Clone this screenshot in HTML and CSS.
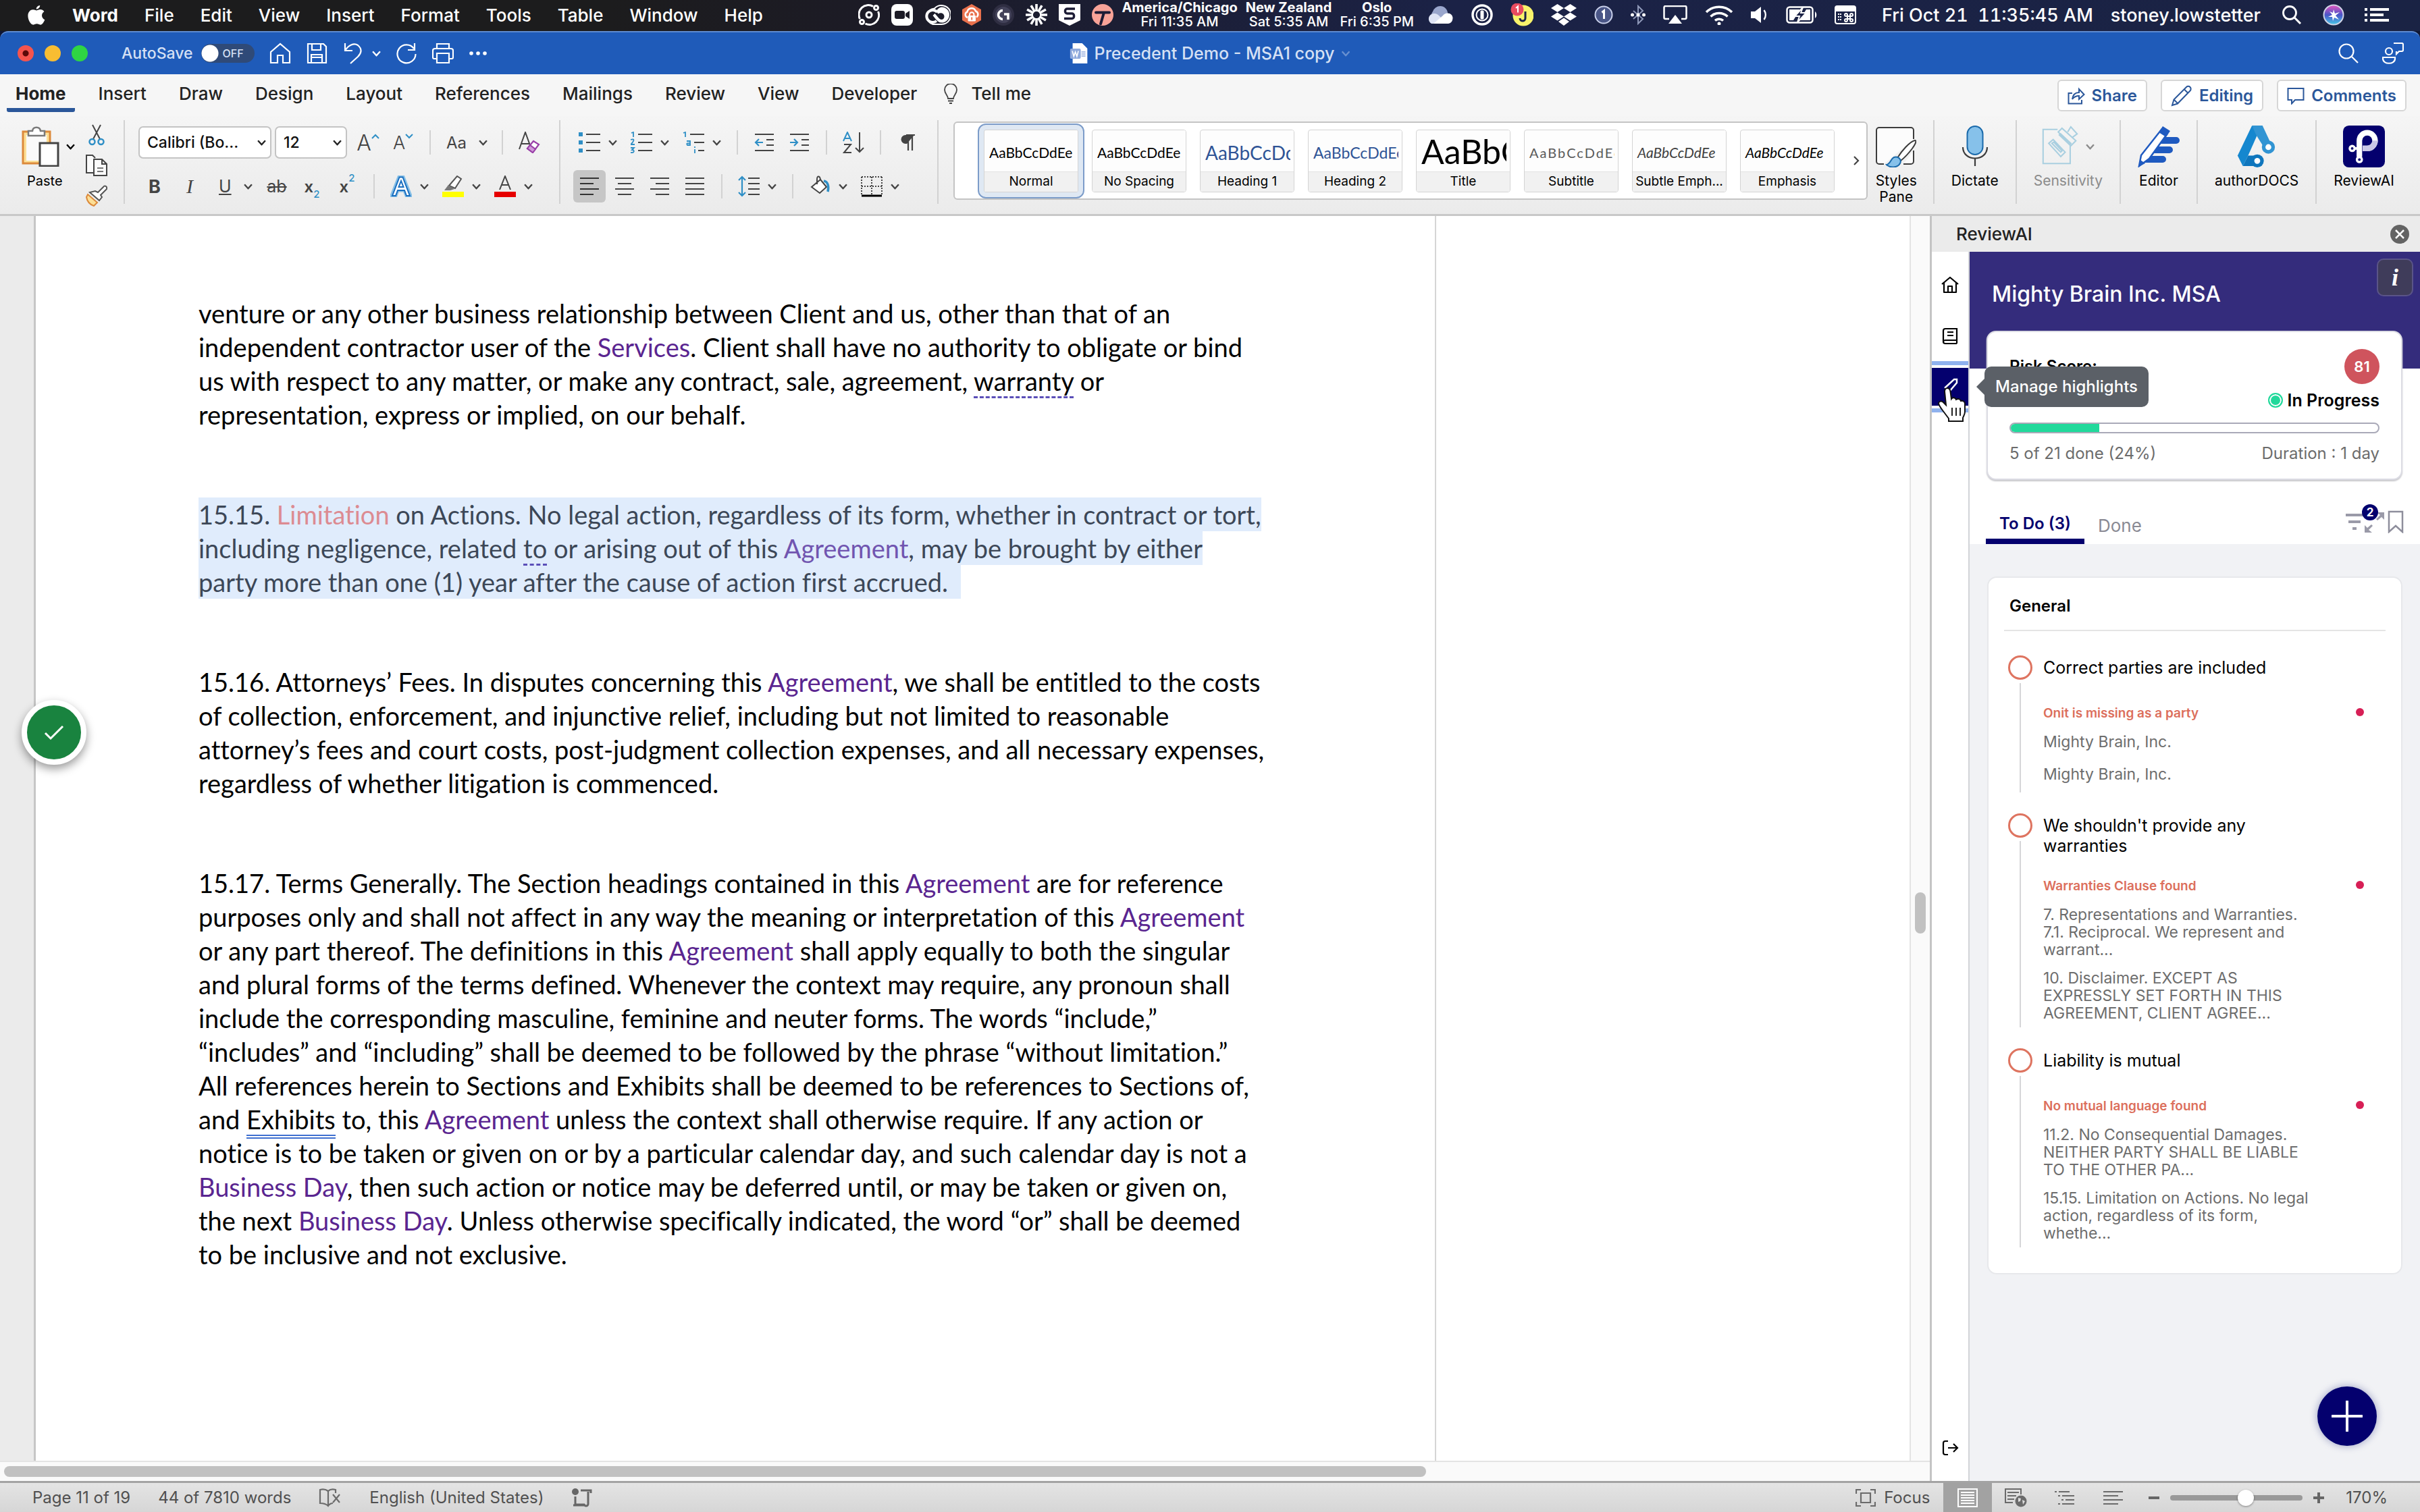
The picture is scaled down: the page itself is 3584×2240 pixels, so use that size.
FILE: index.html
```html
<!DOCTYPE html>
<html lang="en">
<head>
<meta charset="utf-8">
<title>Precedent Demo - MSA1 copy</title>
<link rel="stylesheet" href="styles.css">
</head>
<body>
<svg class="defs" aria-hidden="true">
  <symbol id="chev" viewBox="0 0 12 8"><path d="M1 1l5 5.500 5-5.500" fill="none" stroke="currentColor" stroke-width="2.200"/></symbol>
</svg>

<header class="menubar">
  <nav class="menus">
    <svg class="apple" viewBox="0 0 28 34"><path fill="#fff" d="M19.500 2c.2 2.700-2.400 6-5.700 6C13.400 5 16.300 2.200 19.500 2zM14.300 10c1.600 0 3-1.400 5.800-1.400 2.300 0 4.700 1.300 6 3.400-5.300 3.200-4.400 10.400 1 12.600-1.300 3.500-4 8-6.800 8-2.200 0-2.900-1.400-5.700-1.400s-3.600 1.400-5.600 1.400C4.800 32.600.6 24.800.6 18.600c0-6.300 4-9.800 7.900-9.800 2.600 0 4.300 1.200 5.800 1.200z"/></svg>
    <a class="app" href="#">Word</a><a href="#">File</a><a href="#">Edit</a><a href="#">View</a><a href="#">Insert</a><a href="#">Format</a><a href="#">Tools</a><a href="#">Table</a><a href="#">Window</a><a href="#">Help</a>
  </nav>
  <div class="extras">
    <div class="tray tray-a">
      <svg viewBox="0 0 32 32" width="32" height="32"><g fill="none" stroke="#fff" stroke-width="3"><path d="M22 3.500A14 14 0 0 0 2.500 22M10.500 29A14 14 0 0 0 29.500 11"/><circle cx="16" cy="16" r="4"/><circle cx="26.500" cy="5.500" r="3"/><circle cx="5.500" cy="26.500" r="3"/></g></svg>
      <svg viewBox="0 0 32 32" width="32" height="32"><rect width="32" height="32" rx="8" fill="#fff"/><rect x="5" y="10" width="15" height="12" rx="3" fill="#1c1b26"/><path d="M21 14l6-4v12l-6-4z" fill="#1c1b26"/></svg>
      <svg viewBox="0 0 39 32" width="39" height="32"><path d="M12.500 30h13A14 14 0 1 0 15 6.500 12 12 0 0 0 12.500 30z" fill="none" stroke="#fff" stroke-width="2"/><path d="M25.500 4.500a11.500 11.500 0 0 1 0 23c-4 0-6-2-9-5.500l-4-5 3-3 6 7c3 3.500 8 2 8-2.500s-5-7-9-4l-3-3.500a11 11 0 0 1 8-6.500z" fill="#fff"/><path d="M19 12a9 9 0 1 0-1 13" fill="none" stroke="#fff" stroke-width="4"/></svg>
      <svg viewBox="0 0 28 32" width="28" height="32"><path d="M14 0l14 8v16l-14 8-14-8V8z" fill="#e9714d"/><path d="M8 20a4.500 4.500 0 0 1-.5-8.500 6.500 6.500 0 0 1 12.500-1 5 5 0 0 1 1 9" fill="none" stroke="#fff" stroke-width="2.500"/><rect x="8.500" y="17" width="11.500" height="8.500" rx="1" fill="#fff"/><path d="M11 17v-1.500a3.200 3.200 0 0 1 6.400 0V17" fill="none" stroke="#fff" stroke-width="2"/><path d="M14.200 19.500v4" stroke="#e9714d" stroke-width="2"/></svg>
      <svg viewBox="0 0 32 32" width="32" height="32"><circle cx="16" cy="16" r="16" fill="#2f2e42"/><circle cx="16" cy="16" r="12" fill="#44435a"/><path d="M15 9.500a6.500 6.500 0 0 0 0 13M17 15h6v8" fill="none" stroke="#fff" stroke-width="3.500"/></svg>
      <svg viewBox="0 0 32 32" width="32" height="32"><g stroke="#fff" stroke-width="3.600"><path d="M16 0v11M16 21v11M0 16h11M21 16h11M8 2.100l5.500 9.600M18.500 20.300L24 29.900M2.100 8l9.600 5.500M20.300 18.500l9.600 5.500M2.100 24l9.600-5.500M20.300 13.500L29.900 8M8 29.900l5.500-9.600M18.500 11.700L24 2.100"/></g></svg>
      <svg viewBox="0 0 32 32" width="32" height="32"><path d="M0 0h32v24l-16 8-16-8z" fill="#fff"/><path d="M24 7H12.500a3 3 0 0 0-3 3v1a3 3 0 0 0 3 3h7a3 3 0 0 1 3 3v1.500a3 3 0 0 1-3 3H8" fill="none" stroke="#1c1b35" stroke-width="3.500"/></svg>
      <svg viewBox="0 0 32 32" width="32" height="32"><circle cx="16" cy="16" r="16" fill="#f8a398"/><path d="M6 12.500h20M18 12.500l-5 17" stroke="#1c1b35" stroke-width="4" stroke-linecap="round" fill="none"/></svg>
    </div>
    <div class="clocks">
      <div><b>America/Chicago</b><span>Fri 11:35 AM</span></div>
      <div><b>New Zealand</b><span>Sat 5:35 AM</span></div>
      <div><b>Oslo</b><span>Fri 6:35 PM</span></div>
    </div>
    <div class="tray tray-b">
      <svg viewBox="0 0 40 26" width="40" height="28"><path d="M20 0a11 11 0 0 1 11 11L12 22A9 9 0 0 1 9 8 11.500 11.500 0 0 1 20 0z" fill="#9aa6cc"/><path d="M7 26a8 8 0 0 1 0-14c4-2 8-1 11 2l12 12z" fill="#dfe4f5"/><path d="M10 26h22a8 8 0 0 0 2-15c-4-1.500-8 0-10 3z" fill="#fff"/></svg>
      <svg viewBox="0 0 32 32" width="32" height="32"><circle cx="16" cy="16" r="14" fill="none" stroke="#fff" stroke-width="3.500"/><circle cx="16" cy="16" r="8.500" fill="none" stroke="#fff" stroke-width="2"/><rect x="13.500" y="9.500" width="5" height="13" rx="1.500" fill="#fff"/></svg>
      <svg viewBox="0 0 34 34" width="34" height="34"><circle cx="19" cy="18" r="15.500" fill="#f8f36b"/><path d="M22 12v10a4 4 0 0 1-8 0" fill="none" stroke="#1d2348" stroke-width="3"/><circle cx="10" cy="9" r="9.500" fill="#e94b60"/><path d="M8 7l3-2.500v9" fill="none" stroke="#fff" stroke-width="2"/></svg>
      <svg viewBox="0 0 38 32" width="38" height="32"><path fill="#fff" d="M9.500 0l9.500 6-9.500 6L0 6zM28.500 0L38 6l-9.500 6L19 6zM9.500 12.500l9.500 6-9.500 6-9.500-6zM28.500 12.500l9.500 6-9.500 6-9.500-6zM19 20.500l8 5.500-8 6-8-6z"/></svg>
      <svg viewBox="0 0 28 28" width="28" height="28"><circle cx="14" cy="14" r="12.500" fill="#4a5687" stroke="#c9d0ea" stroke-width="2"/><path d="M11.500 10.500l3-2.500v12" fill="none" stroke="#fff" stroke-width="3"/></svg>
      <svg viewBox="0 0 22 30" width="22" height="30"><path d="M4 9l14 12-7 7V2l7 7L4 21" fill="none" stroke="#8e98b8" stroke-width="2"/><g fill="#fff"><circle cx="2.500" cy="15" r="2.500"/><circle cx="11" cy="15" r="2.500"/><circle cx="19.500" cy="15" r="2.500"/></g></svg>
      <svg viewBox="0 0 36 28" width="36" height="28"><path d="M9 20H3.500a2 2 0 0 1-2-2V3a2 2 0 0 1 2-2h29a2 2 0 0 1 2 2v15a2 2 0 0 1-2 2H27" fill="none" stroke="#fff" stroke-width="2.500"/><path d="M18 14l10 13H8z" fill="#fff"/></svg>
      <svg viewBox="0 0 42 30" width="42" height="30"><g fill="none" stroke="#fff" stroke-width="3.500"><path d="M2 11a27 27 0 0 1 38 0M8.500 17.500a18 18 0 0 1 25 0M15 23.500a9 9 0 0 1 12 0"/></g><circle cx="21" cy="28" r="2.500" fill="#fff"/></svg>
      <svg viewBox="0 0 26 24" width="26" height="24"><path d="M0 7h6l9-7v24l-9-7H0z" fill="#fff"/><path d="M19.500 5a12 12 0 0 1 0 14" fill="none" stroke="#fff" stroke-width="2.500"/></svg>
      <svg viewBox="0 0 46 26" width="46" height="26"><rect x="1.500" y="1.500" width="38" height="23" rx="4" fill="none" stroke="#fff" stroke-width="2.500"/><path d="M5 5h16L11 21H5zM36 21H20L30 5h6z" fill="#fff"/><path d="M25 2L13 15h7l-3 9 13-14h-8z" fill="#1b2246" stroke="#fff" stroke-width="2"/><path d="M43 8c3 2 3 8 0 10z" fill="#fff"/></svg>
      <svg viewBox="0 0 32 28" width="32" height="28"><rect x="1" y="1" width="30" height="26" rx="3" fill="none" stroke="#fff" stroke-width="2"/><path d="M1 2h30v7H1z" fill="#fff"/><path d="M5 13h5M5 17h5M5 21h5" stroke="#fff" stroke-width="2" stroke-dasharray="2 1"/><g fill="none" stroke="#fff" stroke-width="2"><circle cx="17" cy="14" r="2"/><circle cx="25" cy="14" r="2"/><circle cx="17" cy="22" r="2"/><circle cx="25" cy="22" r="2"/><rect x="19" y="16" width="4" height="4"/></g></svg>
    </div>
    <div class="clock-main"><span>Fri Oct 21&nbsp; 11:35:45 AM</span><span>stoney.lowstetter</span></div>
    <div class="tray tray-c">
      <svg viewBox="0 0 30 28" width="30" height="28"><circle cx="11" cy="11" r="9.500" fill="none" stroke="#fff" stroke-width="2.800"/><path d="M18 18l9 9" stroke="#fff" stroke-width="3"/></svg>
      <svg viewBox="0 0 32 32" width="32" height="32"><defs><linearGradient id="siri" x1="0" y1="0" x2="0" y2="1"><stop offset="0" stop-color="#e655c0"/><stop offset=".5" stop-color="#4a55c8"/><stop offset="1" stop-color="#46c8e8"/></linearGradient></defs><circle cx="16" cy="16" r="14.500" fill="url(#siri)" stroke="#cfd3e6" stroke-width="2"/><path d="M16 8l2 6 7-2-6 5 5 6-7-3-2 5-1-6-6 0 6-3-4-5 5 2z" fill="#fff"/></svg>
      <svg viewBox="0 0 36 20" width="36" height="22"><g stroke="#fff" stroke-width="4"><path d="M8 2h28M8 10h20M8 18h28M0 2h4M0 10h4M0 18h4"/></g></svg>
    </div>
  </div>
</header>

<section class="titlebar">
  <div class="window-ctl"><i class="red"></i><i class="yellow"></i><i class="green"></i></div>
  <label class="autosave">AutoSave<input type="checkbox" role="switch" aria-label="AutoSave"><span class="switch">OFF</span></label>
  <div class="quick">
    <button aria-label="Home"><svg viewBox="0 0 32 32" width="32" height="32"><path d="M2 14L16 2l14 12v16H20V19h-8v11H2z"/></svg></button>
    <button aria-label="Save"><svg viewBox="0 0 32 32" width="32" height="32"><path d="M3 2h23l4 4v24H3zM9 2v9h13V2M8 30V18h16v12M8 22h16"/></svg></button>
    <button aria-label="Undo" class="undo"><svg viewBox="0 0 32 32" width="32" height="32"><path d="M4 1v11h11M4 12c5-8 13-12 19-8 7 6 5 12 0 17L12 31"/></svg><svg class="chev" viewBox="0 0 12 8"><use href="#chev"/></svg></button>
    <button aria-label="Redo"><svg viewBox="0 0 32 32" width="32" height="32"><path d="M28 1v10H18M27 9A13.500 13.500 0 1 0 29.500 17"/></svg></button>
    <button aria-label="Print"><svg viewBox="0 0 32 32" width="32" height="32"><path d="M7 9V2h18v7M7 24H3a2 2 0 0 1-2-2V12a3 3 0 0 1 3-3h24a3 3 0 0 1 3 3v10a2 2 0 0 1-2 2h-4M7 16h18v14H7z"/></svg></button>
    <button aria-label="More"><svg viewBox="0 0 28 8" width="28" height="8"><g fill="#fff" stroke="none"><circle cx="4" cy="4" r="2.800"/><circle cx="14" cy="4" r="2.800"/><circle cx="24" cy="4" r="2.800"/></g></svg></button>
  </div>
  <div class="doc-title">
    <svg viewBox="0 0 26 30" width="26" height="30"><path d="M4 0h14l8 8v22H4z" fill="#fff"/><rect x="0" y="8" width="16" height="15" rx="2" fill="#8fa9dc"/><path d="M3.500 11.500l2.200 8L8 13l2.300 6.500 2.200-8" fill="none" stroke="#fff" stroke-width="1.600"/><path d="M17 13h6M17 16h6M17 19h6" stroke="#8fa9dc" stroke-width="1.500"/></svg>
    <h1>Precedent Demo - MSA1 copy</h1>
    <svg class="chev" viewBox="0 0 12 8"><use href="#chev"/></svg>
  </div>
  <div class="title-right">
    <button aria-label="Search"><svg viewBox="0 0 32 32" width="32" height="32"><circle cx="13" cy="13" r="10.500"/><path d="M21 21l9 9"/></svg></button>
    <button aria-label="Collaborators"><svg viewBox="0 0 32 32" width="32" height="32"><circle cx="10" cy="13" r="5"/><path d="M1 22h18v2c0 9-18 9-18 0zM17 1h12a2 2 0 0 1 2 2v8a2 2 0 0 1-2 2h-4l-4 4v-4"/></svg></button>
  </div>
</section>

<section class="tabs">
  <nav class="tab-list">
    <a class="active" href="#">Home</a><a href="#">Insert</a><a href="#">Draw</a><a href="#">Design</a><a href="#">Layout</a><a href="#">References</a><a href="#">Mailings</a><a href="#">Review</a><a href="#">View</a><a href="#">Developer</a>
    <a class="tellme" href="#"><svg viewBox="0 0 20 30" width="20" height="30"><g fill="none" stroke="#444" stroke-width="1.800"><path d="M6 22c0-5-5-7-5-13a9 9 0 0 1 18 0c0 6-5 8-5 13zM6 25.500h8M8 29h4"/></g></svg>Tell me</a>
  </nav>
  <div class="tab-actions">
    <button><svg viewBox="0 0 26 26" width="26" height="26"><path d="M7 9H1.500v15.500H21V19M7 18c1-7 5-10 10-10V3l7.500 8L17 18v-5c-4 0-7 1-10 5z"/></svg>Share</button>
    <button><svg viewBox="0 0 32 32" width="32" height="32"><path d="M2 30l2.500-8.500L23 3a3.500 3.500 0 0 1 5.500 5.500L10 27.500zM20 6.500l5.500 5.500M4.500 21.500l6 6"/></svg>Editing</button>
    <button><svg viewBox="0 0 26 26" width="26" height="26"><path d="M1.500 2h23v17H12l-5 5.500V19H1.500z"/></svg>Comments</button>
  </div>
</section>

<section class="ribbon">
  <div class="group paste-group">
    <button class="paste">
      <span class="paste-icon"><svg viewBox="0 0 56 60" width="56" height="60"><path d="M2 8h40v47H2z" fill="#fcdf96" stroke="#dc8a3b" stroke-width="3"/><path d="M7 13h30v38H7z" fill="#fafafa"/><path d="M10 14V7h6c1-7 11-7 12 0h6v7z" fill="#fff" stroke="#7a7a7a" stroke-width="2.500"/><path d="M27 25h27v34H27z" fill="#fff" stroke="#444" stroke-width="3"/></svg><svg class="chev" viewBox="0 0 12 8"><use href="#chev"/></svg></span>
      Paste
    </button>
    <div class="clip">
      <button aria-label="Cut"><svg viewBox="0 0 32 32" width="32" height="32"><path d="M10 1l11 21M22 1L11 22" stroke="#444" stroke-width="2" fill="none"/><g fill="none" stroke="#2f8fc6" stroke-width="2.500"><circle cx="9.500" cy="26" r="4"/><circle cx="22.500" cy="26" r="4"/></g></svg></button>
      <button aria-label="Copy"><svg viewBox="0 0 32 32" width="32" height="32"><g fill="#fafafa" stroke="#444" stroke-width="2"><path d="M13 27H1V1h9l4 4"/><path d="M12 7h12l7 7v17H12zM24 7v7h7"/></g><path d="M17 20h9M17 25h9" stroke="#777" stroke-width="2"/></svg></button>
      <button aria-label="Format painter"><svg viewBox="0 0 32 32" width="32" height="32"><path d="M3 14l14 12-5 5C6 29 2 24 1 18z" fill="#fcdf96" stroke="#dc8a3b" stroke-width="2"/><path d="M6 11l14 12 4-5-2-3 9-9c1-4-3-6-5-3l-8 8-4-2z" fill="#fff" stroke="#555" stroke-width="2"/></svg></button>
    </div>
  </div>

  <div class="group rows">
    <div class="row">
      <span class="fields">
        <span class="field font"><select aria-label="Font"><option>Calibri (Bo...</option></select><svg class="chev" viewBox="0 0 12 8"><use href="#chev"/></svg></span>
        <span class="field size"><select aria-label="Font size"><option>12</option></select><svg class="chev" viewBox="0 0 12 8"><use href="#chev"/></svg></span>
      </span>
      <button class="t glyph big-a" aria-label="Grow font">A<svg class="caret" viewBox="0 0 12 8"><path d="M1 7l5-5 5 5"/></svg></button>
      <button class="t glyph small-a" aria-label="Shrink font">A<svg class="caret" viewBox="0 0 12 8"><path d="M1 1l5 5 5-5"/></svg></button>
      <i class="sep"></i>
      <button class="t split glyph case">Aa<svg class="chev" viewBox="0 0 12 8"><use href="#chev"/></svg></button>
      <i class="sep"></i>
      <button class="t" aria-label="Clear formatting"><svg viewBox="0 0 32 32" width="32" height="32"><path d="M1 26L10 1l8 22M4 18h12" fill="none" stroke="#444" stroke-width="2"/><path d="M13 25l9-11 8 5-9 12z" fill="#fff" stroke="#9a3fa8" stroke-width="2.200"/><path d="M13 25l4-5 8 6-4 5z" fill="#cf9ad8" stroke="#9a3fa8" stroke-width="2"/></svg></button>
    </div>
    <div class="row row-b">
      <button class="t glyph bold">B</button>
      <button class="t glyph ital">I</button>
      <button class="t split glyph under"><u>U</u><svg class="chev" viewBox="0 0 12 8"><use href="#chev"/></svg></button>
      <button class="t glyph strike"><s>ab</s></button>
      <button class="t glyph bold script">x<sub>2</sub></button>
      <button class="t glyph bold script">x<sup>2</sup></button>
      <i class="sep"></i>
      <button class="t split" aria-label="Text effects"><svg viewBox="0 0 32 32" width="32" height="32"><path d="M2 30L13 2h6l11 28h-6l-3-8H11l-3 8z" fill="#fff" stroke="#86bfe6" stroke-width="5"/><path d="M3 30L13.500 2.500h5L29 30h-5l-3-8H11l-3 8zM12.500 17h7L16 8z" fill="#fff" stroke="#1a6fc0" stroke-width="2"/></svg><svg class="chev" viewBox="0 0 12 8"><use href="#chev"/></svg></button>
      <button class="t split" aria-label="Highlight"><svg viewBox="0 0 32 32" width="32" height="32"><path d="M10 15L22 1l6 4-9 14z" fill="#fff" stroke="#555" stroke-width="2"/><path d="M3 22l6-8 9 6-6 2z" fill="#777"/><path d="M0 24h32v8H0z" fill="#ff0"/></svg><svg class="chev" viewBox="0 0 12 8"><use href="#chev"/></svg></button>
      <button class="t split" aria-label="Font color"><svg viewBox="0 0 32 32" width="32" height="32"><path d="M8 21L16 1l8 20M11 14h10" fill="none" stroke="#444" stroke-width="2"/><path d="M0 24h32v8H0z" fill="#e60000"/></svg><svg class="chev" viewBox="0 0 12 8"><use href="#chev"/></svg></button>
    </div>
  </div>

  <div class="group rows para">
    <div class="row">
      <button class="t split" aria-label="Bullets"><svg viewBox="0 0 32 32" width="32" height="32"><path d="M0 1h6v6H0zM0 13h6v6H0zM0 25h6v6H0z" fill="#2f8fc6"/><path d="M11 4h21M11 16h21M11 28h21" stroke="#444" stroke-width="2.200"/></svg><svg class="chev" viewBox="0 0 12 8"><use href="#chev"/></svg></button>
      <button class="t split" aria-label="Numbering"><svg viewBox="0 0 32 32" width="32" height="32"><g fill="none" stroke="#2f8fc6" stroke-width="1.800"><path d="M1 2l3-1v7M0 12c6-2 6 1 0 7h6M0 24h5l-3 3c4 0 4 5-2 4"/></g><path d="M11 4h21M11 16h21M11 28h21" stroke="#444" stroke-width="2.200"/></svg><svg class="chev" viewBox="0 0 12 8"><use href="#chev"/></svg></button>
      <button class="t split" aria-label="Multilevel list"><svg viewBox="0 0 32 32" width="32" height="32"><g fill="none" stroke="#2f8fc6" stroke-width="1.800"><path d="M1 2l3-1v7M6 14h5v6H7c-2-3 0-3 4-3M18 26v6M18 22v2"/></g><path d="M11 4h21M17 16h15M23 28h9" stroke="#444" stroke-width="2.200"/></svg><svg class="chev" viewBox="0 0 12 8"><use href="#chev"/></svg></button>
      <i class="sep"></i>
      <button class="t" aria-label="Decrease indent"><svg viewBox="0 0 32 32" width="32" height="32"><path d="M2 4h28M19 12h11M19 20h11M2 28h28" stroke="#444" stroke-width="2.200"/><path d="M14 16H3M8 11l-5 5 5 5" fill="none" stroke="#2f8fc6" stroke-width="2.200"/></svg></button>
      <button class="t" aria-label="Increase indent"><svg viewBox="0 0 32 32" width="32" height="32"><path d="M2 4h28M19 12h11M19 20h11M2 28h28" stroke="#444" stroke-width="2.200"/><path d="M2 16h11M8 11l5 5-5 5" fill="none" stroke="#2f8fc6" stroke-width="2.200"/></svg></button>
      <i class="sep"></i>
      <button class="t" aria-label="Sort"><svg viewBox="0 0 32 32" width="32" height="32"><path d="M1 14L7 1l6 13M3 10h8" fill="none" stroke="#2f8fc6" stroke-width="2"/><path d="M2 19h10L2 31h11M25 1v29M19 24l6 6 6-6" fill="none" stroke="#444" stroke-width="2"/></svg></button>
      <i class="sep"></i>
      <button class="t" aria-label="Show paragraph marks"><svg viewBox="0 0 32 32" width="32" height="32"><path d="M26 5h-13a6.500 6.500 0 0 0 0 13h2" fill="#444"/><path d="M27 5H14M17 5v23M23 5v23" stroke="#444" stroke-width="2.200" fill="none"/></svg></button>
    </div>
    <div class="row">
      <button class="t picked" aria-label="Align left"><svg viewBox="0 0 32 32" width="32" height="32"><path d="M2 4h28M2 12h20M2 20h28M2 28h20" stroke="#333" stroke-width="2.200"/></svg></button>
      <button class="t" aria-label="Align center"><svg viewBox="0 0 32 32" width="32" height="32"><path d="M2 4h28M6 12h20M2 20h28M6 28h20" stroke="#444" stroke-width="2.200"/></svg></button>
      <button class="t" aria-label="Align right"><svg viewBox="0 0 32 32" width="32" height="32"><path d="M2 4h28M10 12h20M2 20h28M10 28h20" stroke="#444" stroke-width="2.200"/></svg></button>
      <button class="t" aria-label="Justify"><svg viewBox="0 0 32 32" width="32" height="32"><path d="M2 4h28M2 12h28M2 20h28M2 28h28" stroke="#444" stroke-width="2.200"/></svg></button>
      <i class="sep"></i>
      <button class="t split" aria-label="Line spacing"><svg viewBox="0 0 32 32" width="32" height="32"><path d="M6 2v28M1 7l5-5 5 5M1 25l5 5 5-5" fill="none" stroke="#2f8fc6" stroke-width="2.200"/><path d="M15 4h17M15 12h17M15 20h17M15 28h17" stroke="#444" stroke-width="2.200"/></svg><svg class="chev" viewBox="0 0 12 8"><use href="#chev"/></svg></button>
      <i class="sep"></i>
      <button class="t split" aria-label="Shading"><svg viewBox="0 0 32 32" width="32" height="32"><path d="M4 17L17 6l9 11-10 9zM17 6c-1-6-5-6-5 0v7" fill="#fff" stroke="#444" stroke-width="2"/><path d="M22 8c6 1 8 8 6 16" fill="none" stroke="#2f8fc6" stroke-width="3.500"/></svg><svg class="chev" viewBox="0 0 12 8"><use href="#chev"/></svg></button>
      <button class="t split" aria-label="Borders"><svg viewBox="0 0 32 32" width="32" height="32"><path d="M1 2h30M1 2v27M31 2v27M16 2v27M1 16h30" fill="none" stroke="#444" stroke-width="2" stroke-dasharray="2 2"/><path d="M1 30h30" stroke="#000" stroke-width="3"/></svg><svg class="chev" viewBox="0 0 12 8"><use href="#chev"/></svg></button>
    </div>
  </div>

  <div class="gallery">
    <div class="cards">
      <button class="style-card chosen"><span class="sample">AaBbCcDdEe</span><span class="name">Normal</span></button>
      <button class="style-card"><span class="sample">AaBbCcDdEe</span><span class="name">No Spacing</span></button>
      <button class="style-card"><span class="sample h1">AaBbCcDdEe</span><span class="name">Heading 1</span></button>
      <button class="style-card"><span class="sample h2">AaBbCcDdEe</span><span class="name">Heading 2</span></button>
      <button class="style-card"><span class="sample title">AaBbCcDdEe</span><span class="name">Title</span></button>
      <button class="style-card"><span class="sample subtitle">AaBbCcDdEe</span><span class="name">Subtitle</span></button>
      <button class="style-card"><span class="sample em soft">AaBbCcDdEe</span><span class="name">Subtle Emph...</span></button>
      <button class="style-card"><span class="sample em">AaBbCcDdEe</span><span class="name">Emphasis</span></button>
    </div>
    <button class="next" aria-label="More styles"><svg viewBox="0 0 10 14" width="10" height="14"><path d="M2 1l6 6-6 6" fill="none" stroke="#444" stroke-width="2.200"/></svg></button>
  </div>

  <div class="bigs">
    <button class="big first"><svg viewBox="0 0 60 62" width="60" height="62"><path d="M12 57H5a4 4 0 0 1-4-4V7a4 4 0 0 1 4-4h47a4 4 0 0 1 4 4v13M56 37v16a4 4 0 0 1-4 4H41" fill="#fcfcfc" stroke="#3c3c3c" stroke-width="2"/><path d="M32 48C38 38 50 24 58 22c3 0 1 5-4 12-6 8-12 14-17 18z" fill="#fff" stroke="#3c3c3c" stroke-width="2"/><path d="M16 58c6-1 6-9 11-11 6-2 12 3 9 9-4 7-15 7-20 2z" fill="#86c1ea" stroke="#1a6aab" stroke-width="2"/></svg><span>Styles<br>Pane</span></button>
    <button class="big"><svg viewBox="0 0 60 62" width="60" height="62"><rect x="18.500" y="1" width="23" height="42" rx="11.500" fill="#86c1ea" stroke="#1a6aab" stroke-width="2"/><path d="M12 32c0 22 36 22 36 0M30 49v11" fill="none" stroke="#3c3c3c" stroke-width="2.200"/></svg><span>Dictate</span></button>
    <button class="big dim" disabled><span class="with-chev"><svg viewBox="0 0 60 62" width="56" height="62"><g fill="none" stroke="#a9cfe0" stroke-width="2.200"><path d="M26 4H3v54h43V30"/><path d="M12 26l7-6 19 20-7 7zM17 26l3-2 13 14-2 2z"/><path d="M27 8l6-6 22 20-8 8zM42 8l5-8 10 11-8 6"/></g><path d="M29 11l18 17" stroke="#a9cfe0" stroke-width="5"/></svg><svg class="chev" viewBox="0 0 12 8"><use href="#chev"/></svg></span><span>Sensitivity</span></button>
    <button class="big"><svg viewBox="0 0 62 62" width="62" height="62"><path d="M34 17h23a5 5 0 0 1 0 10H28zM26 31h21a5 5 0 0 1 0 10H20zM17 45h20a5 5 0 0 1 0 10H10z" fill="#1f5ac0"/><path d="M2 60l3-16L35 6l8 7-26 36z" fill="#fff" stroke="#1f5ac0" stroke-width="2.500"/><path d="M31 10l6-9 11 7-6 9zM1 61l3-10 7 5z" fill="#1f5ac0"/></svg><span>Editor</span></button>
    <button class="big"><svg viewBox="0 0 58 64" width="58" height="62"><path d="M22 0L0 46l8 16 8-16L31 12z" fill="#1587cf"/><path d="M22 0h16l14 30-10 6-14-22z" fill="#3194d3"/><path d="M8 62l8-16h14v16z" fill="#0f76bd"/><circle cx="30" cy="54" r="10" fill="#0f76bd"/><circle cx="30" cy="54" r="4.500" fill="#fff"/><circle cx="47" cy="33" r="10" fill="#3194d3"/><circle cx="47" cy="33" r="4.500" fill="#fff"/></svg><span>authorDOCS</span></button>
    <button class="big"><svg viewBox="0 0 64 64" width="64" height="62"><rect width="64" height="64" rx="9" fill="#04006e"/><path d="M30 35h7a12 12 0 1 0-12-12v25" fill="none" stroke="#fff" stroke-width="8.500"/><path d="M30 35h7a12 12 0 0 0 12-12" fill="none" stroke="#c9c7e6" stroke-width="8.500"/><path d="M14 35h14" stroke="#fff" stroke-width="4"/><circle cx="14" cy="35" r="5.500" fill="#fff"/><circle cx="14" cy="35" r="2" fill="#04006e"/><circle cx="25" cy="52" r="5.500" fill="#fff"/><circle cx="25" cy="52" r="2" fill="#04006e"/></svg><span>ReviewAI</span></button>
  </div>
</section>

<main class="work">
  <div class="editor">
    <div class="canvas">
      <div class="gutter"></div>
      <article class="page">
        <p><span>venture or any other business relationship between Client and us, other than that of an</span><span>independent contractor user of the <em>Services</em>. Client shall have no authority to obligate or bind</span><span>us with respect to any matter, or make any contract, sale, agreement, <u class="dots">warranty</u> or</span><span>representation, express or implied, on our behalf.</span></p>
        <p class="selected"><span>15.15. <em class="rose">Limitation</em> on Actions. No legal action, regardless of its form, whether in contract or tort,</span><span>including negligence, related <u class="dots">to</u> or arising out of this <em>Agreement</em>, may be brought by either</span><span>party more than one (1) year after the cause of action first accrued.&nbsp;&nbsp;</span></p>
        <p><span>15.16. Attorneys’ Fees. In disputes concerning this <em>Agreement</em>, we shall be entitled to the costs</span><span>of collection, enforcement, and injunctive relief, including but not limited to reasonable</span><span>attorney’s fees and court costs, post-judgment collection expenses, and all necessary expenses,</span><span>regardless of whether litigation is commenced.</span></p>
        <p><span>15.17. Terms Generally. The Section headings contained in this <em>Agreement</em> are for reference</span><span>purposes only and shall not affect in any way the meaning or interpretation of this <em>Agreement</em></span><span>or any part thereof. The definitions in this <em>Agreement</em> shall apply equally to both the singular</span><span>and plural forms of the terms defined. Whenever the context may require, any pronoun shall</span><span>include the corresponding masculine, feminine and neuter forms. The words “include,”</span><span>“includes” and “including” shall be deemed to be followed by the phrase “without limitation.”</span><span>All references herein to Sections and Exhibits shall be deemed to be references to Sections of,</span><span>and <u class="twice">Exhibits</u> to, this <em>Agreement</em> unless the context shall otherwise require. If any action or</span><span>notice is to be taken or given on or by a particular calendar day, and such calendar day is not a</span><span><em>Business Day</em>, then such action or notice may be deferred until, or may be taken or given on,</span><span>the next <em>Business Day</em>. Unless otherwise specifically indicated, the word “or” shall be deemed</span><span>to be inclusive and not exclusive.</span></p>
      </article>
      <div class="margin-area"></div>
      <div class="check-badge"><svg viewBox="0 0 30 24" width="30" height="24"><path d="M2 13l8 8L28 3" fill="none" stroke="#fff" stroke-width="3"/></svg></div>
    </div>
    <div class="vscroll"><i></i></div>
    <div class="hscroll"><i></i></div>
  </div>

  <aside class="pane">
    <div class="pane-head"><h2>ReviewAI</h2><button class="close" aria-label="Close"><svg viewBox="0 0 28 28" width="28" height="28"><circle cx="14" cy="14" r="14" fill="#636363"/><path d="M8 8l12 12M20 8L8 20" stroke="#fff" stroke-width="2.500"/></svg></button></div>
    <div class="pane-body">
      <nav class="rail">
        <button aria-label="Home"><svg viewBox="0 0 26 26" width="26" height="26"><path d="M1 12L13 2l12 10M4 10v14h18V10M10 24v-9h6v9" fill="none" stroke="#000" stroke-width="2.200" stroke-linejoin="round"/></svg></button>
        <button aria-label="Playbook"><svg viewBox="0 0 26 26" width="26" height="26"><path d="M23 19V2H6a3 3 0 0 0-3 3v16a3 3 0 0 0 3 3h17M3 21a3 3 0 0 1 3-2h17v5M9 7h9M9 12h9" fill="none" stroke="#000" stroke-width="2.200"/></svg></button>
        <button class="current" aria-label="Manage highlights"><svg viewBox="0 0 26 26" width="26" height="26"><path d="M6 14L19 2h4v5L12 20z" fill="none" stroke="#fff" stroke-width="2.500"/></svg></button>
        <button class="exit" aria-label="Sign out"><svg viewBox="0 0 26 24" width="26" height="24"><path d="M10 2H6a3 3 0 0 0-3 3v14a3 3 0 0 0 3 3h4M10 12h14M18 6l6 6-6 6" fill="none" stroke="#000" stroke-width="2.200"/></svg></button>
        <div class="tooltip" role="tooltip">Manage highlights</div>
        <svg class="pointer" viewBox="0 0 48 56" width="48" height="56"><path d="M16 3c3 0 4 2 4.500 5L22 19c2-3 6-2 7 1 3-2 6-1 7 2 3-1 6 1 6 4v12c0 4-2 6-3 9v5H18v-4L9 36c-3-4-6-8-6-11 1-3 5-3 7-1l4 4-2-20c0-3 1-5 4-5z" fill="#fff" stroke="#111" stroke-width="2"/><path d="M23 32v12M29 32v12M35 32v12" stroke="#222" stroke-width="2"/></svg>
      </nav>
      <div class="panel">
        <header class="hero"><h3>Mighty Brain Inc. MSA</h3><button class="info" aria-label="Info">i</button></header>
        <section class="summary">
          <div class="line score"><span>Risk Score:</span><b class="risk">81</b></div>
          <div class="line status"><span>Review Status:</span><span class="state"><i></i>In Progress</span></div>
          <div class="progress"><i style="width:24%"></i></div>
          <div class="line foot"><span>5 of 21 done (24%)</span><span>Duration : 1 day</span></div>
        </section>
        <div class="pane-tabs">
          <button class="on">To Do (3)</button><button>Done</button>
          <div class="tab-icons">
            <button class="filter" aria-label="Filter"><svg viewBox="0 0 60 34" width="60" height="34"><path d="M0 7h26M4 17h18M10 27h6" stroke="#9a9aa8" stroke-width="4"/><path d="M46 3h11v11l-4-4-6 5-2-2 6-6zM28 33V22l4 4 6-5 2 2-6 6 5 4z" fill="#9a9aa8"/></svg><b>2</b></button>
            <button aria-label="Bookmark"><svg viewBox="0 0 24 34" width="24" height="34"><path d="M2 2h20v30l-10-9-10 9z" fill="none" stroke="#8e8e9c" stroke-width="2.500"/></svg></button>
          </div>
        </div>
        <section class="list-wrap">
          <div class="list">
            <h4>General</h4>
            <article class="item">
              <input type="radio" id="i1" name="i1"><label for="i1">Correct parties are included</label>
              <div class="body"><div class="finding">Onit is missing as a party</div><p class="short">Mighty Brain, Inc.</p><p class="short">Mighty Brain, Inc.</p></div>
            </article>
            <article class="item">
              <input type="radio" id="i2" name="i2"><label for="i2">We shouldn't provide any<br>warranties</label>
              <div class="body"><div class="finding">Warranties Clause found</div><p>7. Representations and Warranties.<br>7.1. Reciprocal. We represent and<br>warrant...</p><p>10. Disclaimer. EXCEPT AS<br>EXPRESSLY SET FORTH IN THIS<br>AGREEMENT, CLIENT AGREE...</p></div>
            </article>
            <article class="item">
              <input type="radio" id="i3" name="i3"><label for="i3">Liability is mutual</label>
              <div class="body"><div class="finding">No mutual language found</div><p>11.2. No Consequential Damages.<br>NEITHER PARTY SHALL BE LIABLE<br>TO THE OTHER PA...</p><p>15.15. Limitation on Actions. No legal<br>action, regardless of its form,<br>whethe...</p></div>
            </article>
          </div>
          <button class="fab" aria-label="Add"><svg viewBox="0 0 46 46" width="46" height="46"><path d="M23 1v44M1 23h44" stroke="#fff" stroke-width="4" stroke-linecap="round"/></svg></button>
        </section>
      </div>
    </div>
  </aside>
</main>

<footer class="statusbar">
  <span>Page 11 of 19</span><span>44 of 7810 words</span>
  <svg viewBox="0 0 34 28" width="34" height="28"><path d="M14 4v22M14 4C10 1 6 1 2 2v20c4 0 8 0 12 4 2-3 4-4 7-4M14 4c3-3 7-3 11-2v5M21 9l10 12M31 9L21 21" fill="none" stroke="#6b6b6b" stroke-width="2.200"/></svg>
  <span>English (United States)</span>
  <svg viewBox="0 0 32 28" width="32" height="28"><circle cx="6" cy="5" r="5" fill="#666"/><path d="M6 12v12h14M14 3h15v4M25 5v18a3 3 0 0 1-6 0M3 25h16" fill="none" stroke="#666" stroke-width="3"/></svg>
  <div class="views">
    <button class="focus"><svg viewBox="0 0 30 26" width="30" height="26"><path d="M1 7V1h7M22 1h7v6M29 19v6h-7M8 25H1v-6M8 6h14v14H8z" fill="none" stroke="#6b6b6b" stroke-width="2.200"/></svg>Focus</button>
    <button class="view on" aria-label="Print layout"><svg viewBox="0 0 30 28" width="30" height="28"><path d="M1 1h28v26H1zM5 6h20M5 10h20M5 14h20M5 18h20M5 22h20" fill="none" stroke="#fff" stroke-width="2"/></svg></button>
    <button class="view" aria-label="Web layout"><svg viewBox="0 0 34 28" width="34" height="28"><path d="M12 21H1V1h23v8M4 6h17M4 11h13M4 16h10" fill="none" stroke="#6b6b6b" stroke-width="2"/><circle cx="24" cy="19" r="8.500" fill="#6b6b6b"/><path d="M20 14l4 1-1 4-3 1zM26 17l4 2-3 5z" fill="#ddd"/></svg></button>
    <button class="view" aria-label="Outline"><svg viewBox="0 0 30 22" width="30" height="22"><path d="M0 2h3M6 2h16M5 8h3M11 8h18M10 14h3M16 14h13M5 20h3M11 20h18" stroke="#6b6b6b" stroke-width="2.200"/></svg></button>
    <button class="view" aria-label="Draft"><svg viewBox="0 0 30 22" width="30" height="22"><path d="M0 2h29M0 8h22M0 14h29M0 20h22" stroke="#6b6b6b" stroke-width="2.200"/></svg></button>
    <button class="zoom-step" aria-label="Zoom out"><svg viewBox="0 0 16 16" width="16" height="16"><path d="M0 8h16" stroke="#666" stroke-width="4"/></svg></button>
    <input class="zoom" type="range" min="0" max="100" value="58" aria-label="Zoom">
    <button class="zoom-step" aria-label="Zoom in"><svg viewBox="0 0 16 16" width="16" height="16"><path d="M0 8h16M8 0v16" stroke="#666" stroke-width="4"/></svg></button>
    <span class="pct">170%</span>
  </div>
</footer>
</body>
</html>
```
FILE: styles.css
```css
* { box-sizing: border-box; }
body {
  margin: 0;
  height: 100vh;
  display: flex;
  flex-direction: column;
  font-family: Inter, "Liberation Sans", sans-serif;
  font-size: 26px;
  color: #222;
  background: #0e1633;
  overflow: hidden;
}
button { border: 0; background: none; padding: 0; font: inherit; color: inherit; display: flex; align-items: center; }
a { color: inherit; text-decoration: none; }
svg { flex: none; display: block; }
h1, h2, h3, h4, p { margin: 0; font-weight: 400; }
.defs { position: absolute; width: 0; height: 0; }
.chev { width: 13px; height: 9px; }

/* menu bar */
.menubar {
  height: 46px;
  flex: none;
  display: flex;
  align-items: center;
  justify-content: space-between;
  padding: 0 46px 2px 40px;
  color: #fff;
  background: linear-gradient(90deg, #1c1c1d 0 25%, #1c1b26 36%, #1b2246 60%, #1a2344);
}
.menus { display: flex; align-items: center; gap: 39px; font-size: 26px; font-weight: 500; }
.menus .app { font-weight: 700; }
.apple { width: 28px; height: 32px; }
.extras { display: flex; align-items: center; }
.tray { display: flex; align-items: center; }
.tray-a { gap: 17px; margin-right: 12px; }
.tray-b { gap: 26px; margin: 0 38px 0 19px; }
.tray-c { gap: 30px; margin-left: 32px; }
.clocks { display: flex; gap: 12px; text-align: center; font-size: 20px; line-height: 21px; font-weight: 500; white-space: nowrap; }
.clocks b { font-weight: 700; }
.clocks b, .clocks span { display: block; }
.clock-main { display: flex; gap: 26px; font-size: 27px; font-weight: 500; white-space: nowrap; font-variant-numeric: tabular-nums; }

/* title bar */
.titlebar {
  position: relative;
  height: 64px;
  flex: none;
  display: flex;
  align-items: center;
  padding: 0 24px 0 26px;
  background: #1f5bb9;
  border-top: 2px solid #5d8ad0;
  border-radius: 12px 12px 0 0;
  color: #d5e0f4;
}
.window-ctl { display: flex; gap: 16px; margin-right: 50px; }
.window-ctl i { width: 24px; height: 24px; border-radius: 50%; }
.red { background: radial-gradient(circle, #5c0a08 0 4px, #f5544d 5px); }
.yellow { background: #f8bd32; }
.green { background: #2fd543; }
.autosave { display: flex; align-items: center; gap: 12px; font-size: 23px; font-weight: 500; }
.autosave input { position: absolute; opacity: 0; }
.switch {
  width: 79px; height: 28px; border-radius: 14px;
  background: radial-gradient(circle at 13px 14px, #fff 0 12px, transparent 13px), #2f4a78;
  font-size: 16px; line-height: 28px; padding-left: 32px;
}
.quick { display: flex; align-items: center; gap: 22px; margin-left: 22px; color: #fff; }
.quick svg, .title-right svg { fill: none; stroke: #fff; stroke-width: 2.2px; }
.undo { gap: 12px; }
.quick .chev { stroke: none; }
.doc-title { position: absolute; left: 50%; transform: translateX(-50%); display: flex; align-items: center; gap: 10px; }
.doc-title h1 { font-size: 25px; font-weight: 500; white-space: nowrap; }
.doc-title .chev { opacity: .4; }
.title-right { display: flex; gap: 34px; margin-left: auto; }

/* tabs */
.tabs { flex: none; height: 62px; display: flex; justify-content: space-between; padding: 0 20px 0 10px; background: #f6f6f6; }
.tab-list { display: flex; gap: 22px; font-size: 26px; font-weight: 500; }
.tab-list a { padding: 10px 13px 0; height: 56px; line-height: 38px; white-space: nowrap; }
.tab-list .active { font-weight: 700; border-bottom: 6px solid #2b579a; border-radius: 3px; }
.tab-list .tellme { display: flex; gap: 20px; padding-left: 5px; }
.tellme svg { margin-top: 4px; }
.tab-actions { display: flex; gap: 20px; padding-top: 8px; }
.tab-actions button {
  height: 47px; padding: 0 13px; gap: 10px; background: #fff; border: 2px solid #d6d6d6; border-radius: 6px;
  color: #2b579a; font-size: 24px; font-weight: 600; white-space: nowrap;
}
.tab-actions svg { fill: none; stroke: #2b579a; stroke-width: 2px; }

/* ribbon */
.ribbon {
  flex: none; height: 148px; display: flex; align-items: flex-start; padding: 6px 20px 0 32px;
  background: linear-gradient(#f5f5f5, #ebebeb); border-bottom: 3px solid #c8c8c8; font-size: 20px;
}
.group { height: 124px; border-right: 2px solid #d2d2d2; flex: none; }
.paste-group { display: flex; width: 153px; gap: 16px; }
.paste { flex-direction: column; gap: 9px; padding: 9px 0 0; line-height: 24px; color: #000; align-items: flex-start; text-indent: 8px; height: 124px; }
.paste-icon { display: flex; align-items: center; gap: 10px; }
.clip { display: flex; flex-direction: column; gap: 13px; padding-top: 6px; }
.rows { display: flex; flex-direction: column; gap: 17px; padding: 9px 28px 0 20px; }
.para { padding: 9px 28px 0 27px; }
.row { display: flex; align-items: center; gap: 20px; height: 48px; }
.row-b { padding-left: 8px; }
.fields { display: flex; gap: 5px; margin-right: -5px; }
.field { position: relative; display: block; height: 48px; }
.field.font { width: 197px; }
.field.size { width: 107px; }
.field select {
  appearance: none; width: 100%; height: 100%; padding: 0 11px; border: 2px solid #c4c4c4; border-radius: 7px;
  background: #fff; font: 500 23px Inter, sans-serif; color: #111;
}
.field .chev { position: absolute; right: 8px; top: 20px; }
.t { width: 32px; height: 48px; justify-content: center; color: #444; flex: none; }
.split { width: 57px; justify-content: space-between; }
.picked { width: 48px; margin: 0 -8px; background: #c6c6c6; border-radius: 6px; }
.sep { width: 2px; height: 36px; margin: 0 3px; background: #d2d2d2; }
.glyph { font-size: 27px; font-weight: 400; }
.big-a { font-size: 32px; font-weight: 300; }
.small-a { font-size: 27px; font-weight: 300; }
.caret { width: 12px; height: 8px; margin-bottom: 18px; fill: none; stroke: #2f8fc6; stroke-width: 2px; }
.case { width: 61px; font-size: 24px; margin-right: -2px; }
.bold { font-weight: 700; }
.ital { font-family: "Liberation Serif", serif; font-style: italic; font-size: 30px; }
.under { font-weight: 400; padding-left: 7px; font-size: 25px; }
.strike { font-size: 25px; }
.script { font-size: 24px; font-weight: 600; }
.script sub, .script sup { color: #2f8fc6; font-size: 15px; line-height: 15px; font-weight: 500; }
.script sub { align-self: flex-end; margin-bottom: 5px; }
.script sup { align-self: flex-start; margin-top: 4px; }

.gallery {
  flex: 1; min-width: 0; display: flex; align-items: center; justify-content: space-between; height: 116px; margin: 2px 0 0 22px;
  padding: 0 10px 0 43px; background: #fff; border: 2px solid #c4c4c4; border-radius: 6px;
}
.cards { display: flex; gap: 20px; }
.style-card {
  width: 140px; height: 93px; flex-direction: column; align-items: stretch; border: 1px solid #d4d4d4; border-radius: 4px;
  background: #fdfdfd; overflow: hidden; color: #000;
}
.chosen { outline: 2px solid #7c9cc9; outline-offset: 7px; box-shadow: 0 0 0 8px #dfe8f3; border-radius: 3px; }
.sample { height: 61px; padding-left: 7px; font: 400 21px/66px Lato, sans-serif; text-align: left; overflow: hidden; white-space: nowrap; border-right: 5px solid #fdfdfd; }
.sample.h1 { font-size: 28px; color: #2f5496; }
.sample.h2 { font-size: 23px; color: #2f5496; }
.sample.title { font-size: 50px; line-height: 62px; }
.sample.subtitle { font-size: 20px; color: #5a5a5a; letter-spacing: 2px; }
.sample.em { font-style: italic; }
.sample.soft { color: #404040; }
.name { flex: 1; border-top: 1px solid #e2e2e2; background: #f1f1f1; font-size: 19px; line-height: 28px; text-align: center; white-space: nowrap; }

.bigs { display: flex; flex: none; }
.big { height: 124px; padding: 8px 25px 0; flex-direction: column; gap: 8px; border-right: 2px solid #d2d2d2; color: #000; line-height: 24px; font-size: 21px; text-align: center; }
.big.first { padding: 8px 24px 0 12px; }
.big:last-child { border: 0; padding-right: 18px; }
.big.dim { color: #8b8b8b; }
.with-chev { display: flex; align-items: center; justify-content: center; gap: 10px; }

/* work area */
.work { flex: 1; min-height: 0; display: flex; background: #fafafa; }
.editor { flex: 1; min-width: 0; display: grid; grid-template-columns: 1fr 30px; grid-template-rows: 1fr 30px; }
.canvas { position: relative; display: flex; overflow: hidden; background: #fff; min-height: 0; }
.gutter { width: 53px; flex: none; background: #ebebeb; border-right: 3px solid #c6c6c6; }
.page { flex: none; width: 2074px; padding: 119px 0 0 241px; font: 400 38px/50px Lato, Carlito, sans-serif; font-variant-ligatures: none; color: #000; border-right: 2px solid #d5d5d5; }
.page p { margin-bottom: 98px; }
.page p span { display: block; width: fit-content; white-space: nowrap; }
.page em { font-style: normal; color: #5a2590; }
.page u { text-decoration: none; }
.page .dots { border-bottom: 3px dashed #5b4fb8; }
.page .twice { border-bottom: 6px double #3f6fd0; }
.page .selected { color: #3c4757; }
.selected span { background: #e0ecfc; }
.page .selected em { color: #7155b0; }
.page .selected .rose { color: #dc8b92; }
.margin-area { flex: 1; }
.check-badge {
  position: absolute; left: 32px; top: 717px; width: 96px; height: 96px; border-radius: 50%; border: 8px solid #fff;
  background: #19833f; display: flex; align-items: center; justify-content: center; box-shadow: 0 6px 14px rgba(0,0,0,.4);
}
.vscroll { border-left: 2px solid #e4e4e4; background: #fafafa; padding: 1002px 6px 0; overflow: hidden; }
.vscroll i { display: block; width: 16px; height: 61px; border-radius: 8px; background: #c1c1c1; }
.hscroll { grid-column: 1 / 3; border-top: 2px solid #e4e4e4; padding: 6px; }
.hscroll i { display: block; width: 74%; height: 16px; border-radius: 8px; background: #c1c1c1; }

/* task pane */
.pane { width: 726px; flex: none; display: flex; flex-direction: column; border-left: 3px solid #c4c4c4; background: #fff; font-size: 24px; color: #000; }
.pane-head { height: 53px; flex: none; display: flex; align-items: center; justify-content: space-between; padding: 0 16px 0 36px; background: #ebebeb; }
.pane-head h2 { font-size: 26px; font-weight: 500; color: #222; }
.pane-body { flex: 1; min-height: 0; display: flex; }
.rail { position: relative; width: 56px; flex: none; display: flex; flex-direction: column; align-items: center; padding-top: 11px; border-right: 2px solid #d2d4d8; }
.rail button { width: 100%; height: 76px; justify-content: center; }
.rail .current { height: 56px; margin-top: 9px; background: #04006e; box-shadow: 0 4px #fff, 0 10px #8fb2ee, 0 -4px #fff, 0 -10px #8fb2ee; }
.rail .exit { margin-top: auto; height: 98px; }
.tooltip { position: absolute; left: 78px; top: 170px; height: 60px; padding: 0 16px; border-radius: 10px; background: #5b6067; color: #fff; font-size: 24px; font-weight: 500; line-height: 60px; white-space: nowrap; z-index: 3; }
.tooltip::before { content: ""; position: absolute; left: -12px; top: 17px; border: 13px solid transparent; border-left: 0; border-right-color: #5b6067; }
.pointer { position: absolute; left: 7px; top: 199px; z-index: 4; }
.panel { flex: 1; min-width: 0; display: flex; flex-direction: column; }
.hero { height: 173px; flex: none; display: flex; align-items: flex-start; justify-content: space-between; padding: 10px 10px 0 33px; background: #342c7c; color: #fff; }
.hero h3 { font-size: 32px; line-height: 40px; font-weight: 500; padding-top: 33px; }
.info { width: 54px; height: 56px; justify-content: center; border: 2px solid #5a5488; border-radius: 10px; background: #3f3c5a; font: italic 700 36px "Liberation Serif", serif; }
.summary { margin: -56px 26px 0 25px; height: 221px; flex: none; padding: 25px 32px 0; background: #fff; border: 2px solid #dcdce4; border-radius: 14px; box-shadow: 0 2px 2px #c8c8cc; }
.line { display: flex; justify-content: space-between; align-items: center; font-weight: 600; line-height: 30px; white-space: nowrap; }
.risk { width: 52px; height: 52px; border-radius: 50%; background: #cf545d; color: #fff; font-size: 22px; line-height: 52px; font-weight: 600; text-align: center; }
.status { margin-top: 9px; font-size: 25px; }
.state { display: flex; align-items: center; gap: 7px; }
.state i { width: 22px; height: 22px; border-radius: 50%; background: #21d99b; border: 2px solid #21d99b; box-shadow: inset 0 0 0 2px #fff; }
.progress { height: 16px; margin-top: 18px; border: 2px solid #a9a9b8; border-radius: 8px; overflow: hidden; }
.progress i { display: block; height: 100%; background: #21d99b; }
.foot { margin-top: 15px; font-weight: 400; color: #6c6c6c; font-size: 24px; }
.pane-tabs { flex: none; height: 95px; display: flex; align-items: flex-end; padding: 0 24px 0 24px; gap: 20px; color: #8a8a94; }
.pane-tabs > button { height: 54px; border-bottom: 8px solid transparent; padding: 6px 0 0; font-size: 26px; }
.pane-tabs .on { width: 146px; justify-content: center; padding: 0; border-color: #04006e; color: #04006e; font-size: 24px; font-weight: 600; }
.tab-icons { display: flex; margin-left: auto; gap: 2px; padding-bottom: 16px; }
.filter { position: relative; }
.filter b { position: absolute; left: 24px; top: -9px; width: 24px; height: 24px; border-radius: 50%; background: #04006e; color: #fff; font-size: 17px; line-height: 24px; text-align: center; }
.list-wrap { position: relative; flex: 1; background: #f1f2f5; padding: 48px 26px 0; }
.list { background: #fff; border: 2px solid #e7e8eb; border-radius: 14px; padding: 27px 23px 38px; }
.list h4 { font-weight: 600; line-height: 30px; padding: 0 0 20px 8px; border-bottom: 2px solid #e4e4e4; }
.item { display: grid; grid-template-columns: 36px 1fr; column-gap: 16px; padding: 0 6px; margin-top: 31px; }
.item:first-of-type { margin-top: 36px; }
.item::before { content: ""; grid-area: 1 / 1 / 3 / 2; justify-self: center; width: 2px; margin-top: 41px; background: #d6d6d8; }
.item input { grid-area: 1 / 1; appearance: none; width: 36px; height: 36px; margin: 0; border: 3px solid #de7460; border-radius: 50%; }
.item label { grid-area: 1 / 2; padding-top: 3px; margin-bottom: -5px; font-size: 25px; line-height: 30px; }
.body { grid-area: 2 / 2; padding: 37px 26px 8px 0; color: #6d6d6d; font-size: 23px; line-height: 26px; white-space: nowrap; }
.body p { margin-top: 16px; }
.body .short { padding-bottom: 6px; }
.finding { display: flex; align-items: center; justify-content: space-between; color: #dc6f5c; font-size: 19px; font-weight: 600; }
.finding::after { content: ""; width: 12px; height: 12px; border-radius: 50%; background: #d71f56; margin-bottom: 5px; }
.fab { position: absolute; right: 64px; bottom: 52px; width: 88px; height: 88px; border-radius: 50%; background: #04006e; justify-content: center; box-shadow: 0 0 12px rgba(20,30,120,.4); }

/* status bar */
.statusbar { flex: none; height: 46px; display: flex; align-items: center; gap: 41px; padding-left: 48px; border-top: 3px solid #a3a3a3; background: linear-gradient(#e4e4e4, #d6d6d6); color: #505050; font-size: 24px; white-space: nowrap; }
.views { margin-left: auto; display: flex; align-items: center; height: 100%; padding-right: 48px; }
.focus { gap: 12px; margin-right: 20px; }
.view { width: 72px; height: 100%; justify-content: center; }
.view.on { background: #a2a2a2; }
.zoom-step { margin: 0 16px; }
.zoom { appearance: none; width: 196px; height: 8px; margin: 0; border-radius: 4px; background: #999; }
.zoom::-webkit-slider-thumb { appearance: none; width: 24px; height: 24px; border-radius: 50%; background: #fff; box-shadow: 0 1px 3px rgba(0,0,0,.4); }
.pct { margin-left: 16px; }
```
